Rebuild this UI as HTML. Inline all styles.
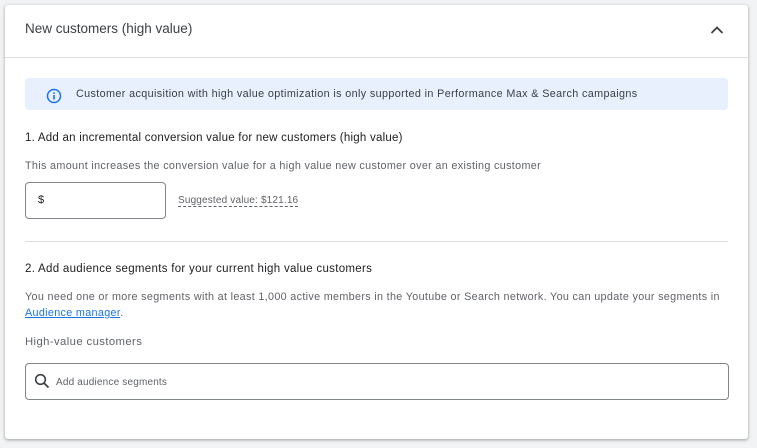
<!DOCTYPE html>
<html><head><style>
body{margin:0;width:757px;height:448px;background:#f1f3f4;font-family:"Liberation Sans",Arial,sans-serif;position:relative;overflow:hidden}
.card{position:absolute;left:5px;top:5px;width:743px;height:434px;background:#fff;border-radius:3px;box-shadow:0 1px 2px rgba(60,64,67,.3),0 1px 3px 1px rgba(60,64,67,.15)}
.a{position:absolute;white-space:nowrap}
</style></head><body>
<div class="card">
<div class="a" style="left:20px;top:16px;font-size:13.5px;color:#3c4043">New customers (high value)</div>
<svg class="a" style="left:705px;top:20px" width="14" height="10"><path d="M1.5 8L7 2.5 12.5 8" fill="none" stroke="#3c4043" stroke-width="1.8"/></svg>
<div class="a" style="left:0;top:52px;width:743px;height:1px;background:#dadce0"></div>
<div class="a" style="left:20px;top:73px;width:703px;height:32px;background:#e8f0fe;border-radius:4px"></div>
<svg class="a" style="left:41px;top:83px" width="16" height="16"><circle cx="8" cy="8" r="6.5" fill="none" stroke="#1a73e8" stroke-width="1.5"/><rect x="7.2" y="7" width="1.6" height="4.5" fill="#1a73e8"/><rect x="7.2" y="4.3" width="1.6" height="1.6" fill="#1a73e8"/></svg>
<div class="a" style="left:71px;top:83px;font-size:10.8px;color:#3c4043;letter-spacing:0.37px">Customer acquisition with high value optimization is only supported in Performance Max &amp; Search campaigns</div>
<div class="a" style="left:20px;top:127px;font-size:11.5px;color:#202124;letter-spacing:0.24px">1. Add an incremental conversion value for new customers (high value)</div>
<div class="a" style="left:20px;top:155px;font-size:10.8px;color:#5f6368;letter-spacing:0.33px">This amount increases the conversion value for a high value new customer over an existing customer</div>
<div class="a" style="left:20px;top:177px;width:139px;height:35px;border:1px solid #80868b;border-radius:4px"></div>
<div class="a" style="left:33px;top:189px;font-size:11px;color:#202124">$</div>
<div class="a" style="left:173px;top:190px;font-size:10px;color:#5f6368;border-bottom:1px dashed #5f6368;line-height:11px;letter-spacing:0.17px">Suggested value: $121.16</div>
<div class="a" style="left:20px;top:236px;width:703px;height:1px;background:#dadce0"></div>
<div class="a" style="left:20px;top:258px;font-size:11.5px;color:#202124;letter-spacing:0.3px">2. Add audience segments for your current high value customers</div>
<div class="a" style="left:20px;top:286px;font-size:10.8px;color:#5f6368;letter-spacing:0.32px">You need one or more segments with at least 1,000 active members in the Youtube or Search network. You can update your segments in</div>
<div class="a" style="left:20px;top:302px;font-size:10.8px;color:#5f6368;letter-spacing:0.32px"><span style="color:#1a73e8;text-decoration:underline">Audience manager</span>.</div>
<div class="a" style="left:20px;top:331px;font-size:11.3px;color:#5f6368;letter-spacing:0.4px">High-value customers</div>
<div class="a" style="left:20px;top:358px;width:702px;height:35px;border:1px solid #80868b;border-radius:4px"></div>
<svg class="a" style="left:29px;top:368px" width="16" height="16"><circle cx="6.5" cy="6.5" r="4.8" fill="none" stroke="#3c4043" stroke-width="1.6"/><path d="M10 10L14.5 14.5" stroke="#3c4043" stroke-width="1.8"/></svg>
<div class="a" style="left:51px;top:372px;font-size:10px;color:#5f6368;letter-spacing:0.18px">Add audience segments</div>
</div>
</body></html>
